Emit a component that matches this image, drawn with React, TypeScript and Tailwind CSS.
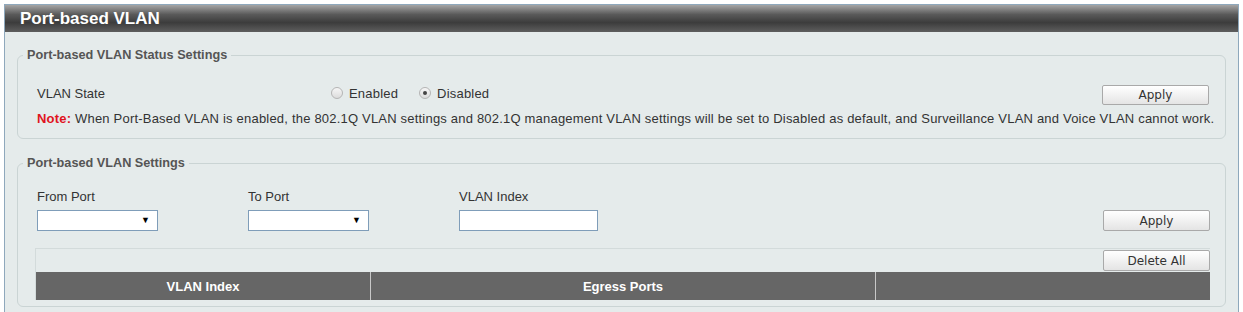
import React from 'react';

const btn =
  "h-[20px] w-[107px] rounded-[2px] border border-[#a9a9a9] bg-[linear-gradient(#ffffff,#e4e4e4)] text-[12px] text-[#333] font-['DejaVu_Sans',Verdana,sans-serif] leading-none";

const Radio = ({ checked, label }: { checked?: boolean; label: string }) => (
  <label className="flex items-center">
    <span className="flex h-[12px] w-[12px] items-center justify-center rounded-full border border-[#b5b5b5] bg-[linear-gradient(#f6f6f6,#dcdcdc)]">
      {checked && <span className="h-[4px] w-[4px] rounded-full bg-[#444]" />}
    </span>
    <span className="ml-[6px] tracking-[0.2px]">{label}</span>
  </label>
);

const Select = () => (
  <div className="flex h-[21px] w-[121px] items-center justify-end border border-[#7f9db9] bg-white pr-[7px]">
    <span className="text-[9px] leading-none text-black">▼</span>
  </div>
);

const App = () => {
  return (
    <div className="min-h-screen bg-white p-1 font-['Liberation_Sans',Arial,sans-serif] text-[13px] leading-[15px] text-[#333]">
      <div className="border border-[#8ea8bc] bg-[#e5ebeb]">
        {/* Title bar */}
        <div className="h-[27px] bg-[linear-gradient(#a5a5a5_0%,#5a5a5a_35%,#3c3c3c_65%,#5e5e5e_100%)] px-[15px] text-[17px] font-bold leading-[27px] text-white">
          Port-based VLAN
        </div>

        <div className="px-3 pt-[16px] pb-3">
          {/* Status settings */}
          <fieldset className="min-w-0 rounded-[6px] border border-[#cad4d4] px-[5px] pb-[12px]">
            <legend className="px-1 text-[12.7px] font-bold text-[#555]">Port-based VLAN Status Settings</legend>
            <div className="pl-[14px] pr-[11px]">
              <div className="mt-[20px] flex h-[20px] items-center">
                <span className="w-[294px]">VLAN State</span>
                <div className="flex items-center gap-[21px]">
                  <Radio label="Enabled" />
                  <Radio label="Disabled" checked />
                </div>
                <button className={`${btn} ml-auto mt-[3px] h-[19px]`}>Apply</button>
              </div>
              <p className="mt-[8px] whitespace-nowrap tracking-[0.2px]">
                <span className="font-bold text-[#e0141e]">Note:</span> When Port-Based VLAN is enabled, the
                802.1Q VLAN settings and 802.1Q management VLAN settings will be set to Disabled as default,
                and Surveillance VLAN and Voice VLAN cannot work.
              </p>
            </div>
          </fieldset>

          {/* VLAN settings */}
          <fieldset className="mt-[17px] min-w-0 rounded-[6px] border border-[#cad4d4] px-[5px] pb-[6px]">
            <legend className="px-1 text-[12.7px] font-bold text-[#555]">Port-based VLAN Settings</legend>
            <div className="pl-[14px] pr-[10px]">
              <div className="mt-[18px] flex items-end">
                <div className="w-[211px]">
                  <div className="mb-[6px]">From Port</div>
                  <Select />
                </div>
                <div className="w-[211px]">
                  <div className="mb-[6px]">To Port</div>
                  <Select />
                </div>
                <div>
                  <div className="mb-[6px]">VLAN Index</div>
                  <div className="h-[21px] w-[139px] border border-[#7f9db9] bg-white" />
                </div>
                <button className={`${btn} ml-auto h-[21px]`}>Apply</button>
              </div>

              <div className="mt-[17px] ml-[-2px] border-t border-l border-[#d3dbdb]">
                <div className="flex justify-end">
                  <button className={`${btn} h-[21px] mt-[1px] mb-[1px]`}>Delete All</button>
                </div>
                <div className="grid h-[28px] grid-cols-[335px_505px_1fr] bg-[#666666] font-bold text-white">
                  <div className="flex items-center justify-center border-r border-[#c8c8c8]">VLAN Index</div>
                  <div className="flex items-center justify-center border-r border-[#c8c8c8]">Egress Ports</div>
                  <div />
                </div>
              </div>
            </div>
          </fieldset>
        </div>
      </div>
    </div>
  );
};

export default App;
